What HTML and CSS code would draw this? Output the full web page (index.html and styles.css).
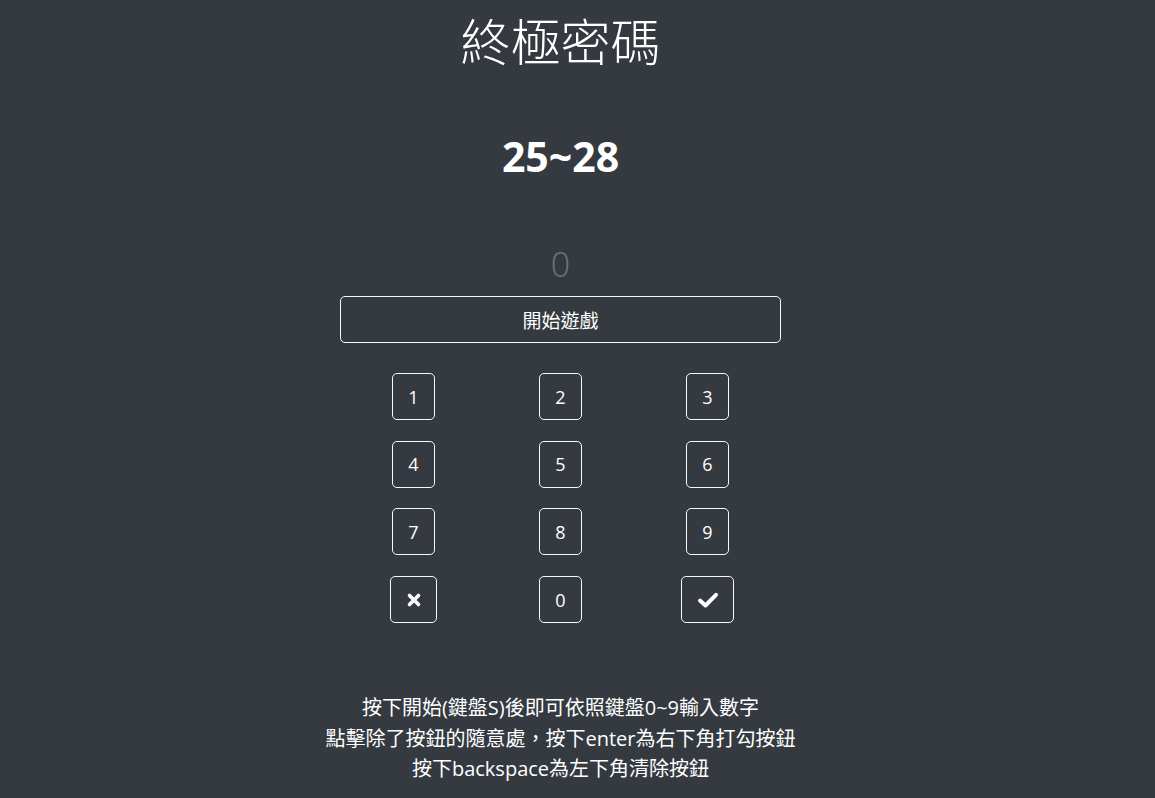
FILE: index.html
```html
<!DOCTYPE html>
<html lang="zh-Hant">
<head>
<meta charset="utf-8">
<title>終極密碼</title>
<link rel="stylesheet" href="styles.css">
</head>
<body>
<main class="page">
  <div class="game">
    <h1 class="title">終極密碼</h1>
    <h2 class="range">25~28</h2>
    <div class="guess">0</div>
    <button class="btn btn-start">開始遊戲</button>
    <div class="keypad">
      <div class="cell"><button class="btn key">1</button></div>
      <div class="cell"><button class="btn key">2</button></div>
      <div class="cell"><button class="btn key">3</button></div>
      <div class="cell"><button class="btn key">4</button></div>
      <div class="cell"><button class="btn key">5</button></div>
      <div class="cell"><button class="btn key">6</button></div>
      <div class="cell"><button class="btn key">7</button></div>
      <div class="cell"><button class="btn key">8</button></div>
      <div class="cell"><button class="btn key">9</button></div>
      <div class="cell"><button class="btn key key-clear" aria-label="clear"><svg width="16" height="16" viewBox="0 0 16 16"><path d="M3.5 3.5 L12.5 12.5 M12.5 3.5 L3.5 12.5" stroke="#fff" stroke-width="3.6" stroke-linecap="round"/></svg></button></div>
      <div class="cell"><button class="btn key">0</button></div>
      <div class="cell"><button class="btn key key-ok" aria-label="ok"><svg width="22" height="18" viewBox="0 0 22 18"><path d="M3 9.5 L8.5 14.5 L19 3.8" fill="none" stroke="#fff" stroke-width="4" stroke-linecap="round" stroke-linejoin="round"/></svg></button></div>
    </div>
    <div class="help">
      <p>按下開始(鍵盤S)後即可依照鍵盤0~9輸入數字</p>
      <p>點擊除了按鈕的隨意處，按下enter為右下角打勾按鈕</p>
      <p>按下backspace為左下角清除按鈕</p>
    </div>
  </div>
</main>
</body>
</html>
```
FILE: styles.css
```css
html, body {
  margin: 0;
  padding: 0;
  background: #343a40;
  color: #fff;
  font-family: "Open Sans", "Noto Sans CJK TC", sans-serif;
}

.page {
  padding-right: 34px;
  min-height: 798px;
  box-sizing: border-box;
}

.game {
  width: 441px;
  margin: 0 auto;
  display: flex;
  flex-direction: column;
  align-items: stretch;
  text-align: center;
}

.title {
  margin: 12px 0 0;
  font-size: 50px;
  font-weight: 300;
  line-height: 60px;
}

.range {
  margin: 60px 0 0;
  font-size: 41px;
  font-weight: 700;
  line-height: 48px;
}

.guess {
  margin-top: 62px;
  font-size: 34px;
  font-weight: 300;
  line-height: 44px;
  color: #6c757d;
}

.btn {
  font-family: "Open Sans", "Noto Sans CJK TC", sans-serif;
  background: transparent;
  color: #fff;
  border: 1px solid #f8f9fa;
  border-radius: 5px;
  cursor: pointer;
  padding: 0;
}

.btn-start {
  margin-top: 10px;
  height: 47px;
  font-size: 19px;
}

.keypad {
  margin-top: 30px;
  display: grid;
  grid-template-columns: repeat(3, 1fr);
  row-gap: 20.7px;
}

.cell {
  display: flex;
  justify-content: center;
}

.key {
  width: 43px;
  height: 47px;
  font-size: 18px;
  display: flex;
  align-items: center;
  justify-content: center;
}

.key-clear {
  width: 47px;
}

.key-ok {
  width: 53px;
}

.help {
  margin: 70px -80px 0;
  font-size: 20px;
  line-height: 30.5px;
  white-space: nowrap;
}

.help p {
  margin: 0;
}
```
